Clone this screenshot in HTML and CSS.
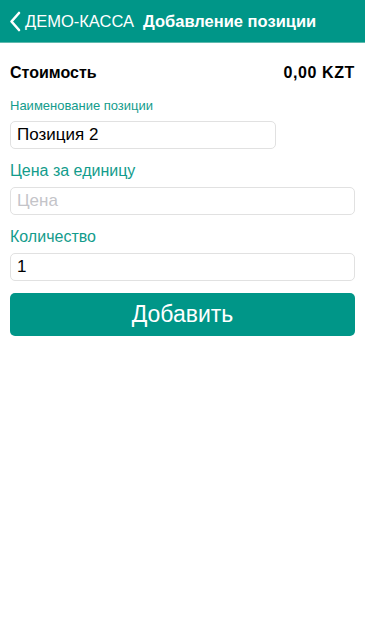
FILE: index.html
```
<!DOCTYPE html>
<html lang="ru">
<head>
<meta charset="utf-8">
<title>Добавление позиции</title>
<link rel="stylesheet" href="styles.css">
</head>
<body>
<div class="navbar">
	<a class="back" href="javascript:void(0);">
		<svg class="chevron" width="12" height="21" viewBox="0 0 12 21"><path d="M10 2 L2.5 10.5 L10 19" fill="none" stroke="#fff" stroke-width="2.6" stroke-linecap="round" stroke-linejoin="round"/></svg>
		<span>ДЕМО-КАССА</span>
	</a>
	<span class="title">Добавление позиции</span>
</div>
<div class="form">
	<div class="total">
		<span>Стоимость</span>
		<span>0,00 KZT</span>
	</div>
	<div class="field">
		<label class="small">Наименование позиции</label>
		<input class="input short" type="text" value="Позиция 2">
	</div>
	<div class="field">
		<label>Цена за единицу</label>
		<input class="input" type="text" placeholder="Цена">
	</div>
	<div class="field">
		<label>Количество</label>
		<input class="input" type="text" value="1">
	</div>
	<button class="btn-add" type="button">Добавить</button>
</div>
</body>
</html>
```
FILE: styles.css
```
html,body{margin:0;padding:0;background:#fff;}
body{font-family:"Liberation Sans",Arial,sans-serif;color:#000;}
.navbar{height:42px;background:#009688;border-bottom:1px solid #5fb9ae;display:flex;align-items:center;padding-left:9px;color:#fff;white-space:nowrap;}
.navbar .back{display:flex;align-items:center;color:#fff;text-decoration:none;font-size:16.5px;}
.navbar .back .chevron{margin-right:4px;margin-top:1px;}
.navbar .title{margin-left:9px;font-size:16.5px;font-weight:bold;}
.form{padding:20px 10px 0;}
.total{display:flex;justify-content:space-between;font-size:16px;font-weight:bold;line-height:20px;margin-bottom:14px;}
.total span:last-child{letter-spacing:0.6px;}
.field{display:flex;flex-direction:column;margin-bottom:13px;}
.field label{color:#139c8c;font-size:16px;line-height:18px;margin-bottom:7px;}
.field label.small{font-size:13px;margin-bottom:6px;}
.input{box-sizing:border-box;height:28px;border:1px solid #e1e1e1;border-radius:5px;padding:0 6px;font:17px "Liberation Sans",Arial,sans-serif;color:#000;outline:none;}
.input.short{width:266px;}
.input::placeholder{color:#c4c4c9;}
.btn-add{display:block;box-sizing:border-box;width:100%;height:43px;margin-top:-1px;border:0;border-radius:5px;background:#009688;color:#fff;font:23px "Liberation Sans",Arial,sans-serif;}
```
